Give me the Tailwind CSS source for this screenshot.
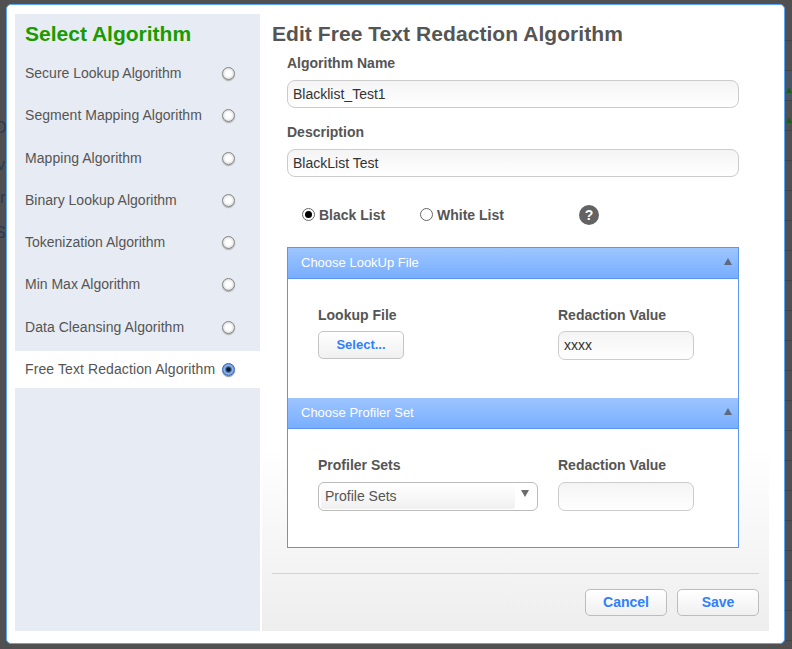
<!DOCTYPE html>
<html lang="en">
<head>
  <meta charset="UTF-8">
  <title>Edit Free Text Redaction Algorithm</title>
  <script src="https://cdn.jsdelivr.net/npm/@tailwindcss/browser@4"></script>
</head>
<body class="relative w-[792px] h-[649px] overflow-hidden bg-[#505050] font-['Liberation_Sans',Arial,sans-serif] text-[14px] text-[#555]">
  <!-- page showing behind the dialog overlay -->
  <div class="absolute top-0 right-0 w-[7px] h-full bg-[repeating-linear-gradient(to_bottom,#505050_0,#505050_29px,#444444_29px,#444444_30px)] bg-[position:0_11px]"></div>
  <div class="absolute top-[71px] right-0 w-[7px] h-[29px] bg-[#4a5663]"></div>
  <span class="absolute top-[87px] right-0 w-0 h-0 border-x-[3px] border-x-transparent border-b-[6px] border-b-[#1c5c1c]"></span>
  <span class="absolute top-[117px] right-0 w-0 h-0 border-x-[3px] border-x-transparent border-b-[6px] border-b-[#1c5c1c]"></span>
  <span class="absolute left-[-5px] top-[119px] text-[16px] leading-[18px] text-[#2b3a52]">D</span>
  <span class="absolute left-[-3px] top-[156px] text-[16px] leading-[18px] text-[#2b3a52]">v</span>
  <span class="absolute left-[0px] top-[189px] text-[16px] leading-[18px] text-[#2b3a52]">r</span>
  <span class="absolute left-[-5px] top-[224px] text-[16px] leading-[18px] text-[#2b3a52]">S</span>

  <div class="relative ml-[6px] mt-[4px] w-[779px] h-[640px] bg-white border border-[#5aa5f5] rounded-[5px] pl-[8px] pt-[9px] flex gap-[2px]">
    <!-- left list -->
    <div class="w-[245px] h-[617px] bg-[#e7ebf3]">
      <h2 class="h-[40px] pl-[10px] pt-[7px] text-[21px] leading-[26px] font-bold text-[#199b00]">Select Algorithm</h2>
      <div class="mt-[0.5px] flex flex-col gap-[5px]">
        <div class="h-[37px] pl-[10px] pr-[25px] flex items-center justify-between">Secure Lookup Algorithm<span class="w-[13px] h-[13px] rounded-full border border-[#858585] bg-radial from-white from-35% to-[#c6c6c6] shadow-[0_1px_1px_#aaa]"></span></div>
        <div class="h-[37px] pl-[10px] pr-[25px] flex items-center justify-between tracking-[0.04px]">Segment Mapping Algorithm<span class="w-[13px] h-[13px] rounded-full border border-[#858585] bg-radial from-white from-35% to-[#c6c6c6] shadow-[0_1px_1px_#aaa]"></span></div>
        <div class="mt-[1px] h-[37px] pl-[10px] pr-[25px] flex items-center justify-between tracking-[0.05px]">Mapping Algorithm<span class="w-[13px] h-[13px] rounded-full border border-[#858585] bg-radial from-white from-35% to-[#c6c6c6] shadow-[0_1px_1px_#aaa]"></span></div>
        <div class="h-[37px] pl-[10px] pr-[25px] flex items-center justify-between">Binary Lookup Algorithm<span class="w-[13px] h-[13px] rounded-full border border-[#858585] bg-radial from-white from-35% to-[#c6c6c6] shadow-[0_1px_1px_#aaa]"></span></div>
        <div class="h-[37px] pl-[10px] pr-[25px] flex items-center justify-between">Tokenization Algorithm<span class="w-[13px] h-[13px] rounded-full border border-[#858585] bg-radial from-white from-35% to-[#c6c6c6] shadow-[0_1px_1px_#aaa]"></span></div>
        <div class="h-[37px] pl-[10px] pr-[25px] flex items-center justify-between">Min Max Algorithm<span class="w-[13px] h-[13px] rounded-full border border-[#858585] bg-radial from-white from-35% to-[#c6c6c6] shadow-[0_1px_1px_#aaa]"></span></div>
        <div class="mt-[1px] h-[37px] pl-[10px] pr-[25px] flex items-center justify-between tracking-[0.05px]">Data Cleansing Algorithm<span class="w-[13px] h-[13px] rounded-full border border-[#858585] bg-radial from-white from-35% to-[#c6c6c6] shadow-[0_1px_1px_#aaa]"></span></div>
        <div class="h-[37px] pl-[10px] pr-[25px] flex items-center justify-between bg-white tracking-[0.1px]">Free Text Redaction Algorithm<span class="w-[13px] h-[13px] rounded-full border border-[#2f62ad] bg-radial from-[#0b1a33] from-20% via-[#8fb6ee] via-50% to-[#3f78cf] shadow-[0_1px_1px_#789]"></span></div>
      </div>
    </div>

    <!-- edit form -->
    <div class="w-[507px] h-[617px] pl-[10px] bg-linear-to-b from-white from-70% to-[#eeeeee]">
      <h2 class="pt-[7px] h-[40px] text-[21px] leading-[26px] font-bold text-[#555] tracking-[0.06px]">Edit Free Text Redaction Algorithm</h2>
      <div class="ml-[15px] w-[452px]">
        <label class="block h-[18px] leading-[18px] font-bold">Algorithm Name</label>
        <div class="mt-[8px] h-[28px] px-[5px] flex items-center bg-linear-to-b from-[#f4f4f4] to-white border border-[#ccc] rounded-[8px] text-[#333]">Blacklist_Test1</div>
        <label class="block mt-[15px] h-[18px] leading-[18px] font-bold">Description</label>
        <div class="mt-[8px] h-[28px] px-[5px] flex items-center bg-linear-to-b from-[#f4f4f4] to-white border border-[#ccc] rounded-[8px] text-[#333]">BlackList Test</div>

        <div class="mt-[27px] h-[22px] pl-[15px] flex items-center font-bold">
          <span class="w-[13px] h-[13px] mb-[2px] rounded-full border border-[#666] bg-white flex items-center justify-center"><span class="w-[7px] h-[7px] rounded-full bg-black"></span></span>
          <span class="ml-[4px] w-[101px]">Black List</span>
          <span class="w-[13px] h-[13px] mb-[2px] rounded-full border border-[#666] bg-white"></span>
          <span class="ml-[4px] w-[142px]">White List</span>
          <span class="w-[20px] h-[20px] rounded-full bg-[#636363] text-white text-[14px] leading-[20px] text-center">?</span>
        </div>

        <div class="mt-[21px] h-[301px] border border-[#5c94ee] bg-white">
          <div class="h-[31px] pl-[13px] pr-[6px] flex items-center justify-between bg-linear-to-b from-[#9dc5ff] to-[#78aeff] border-b border-[#5c94ee] text-white text-[13px]">Choose LookUp File<span class="w-0 h-0 border-x-[4px] border-x-transparent border-b-[7px] border-b-[#5e6a7c] mb-[3px]"></span></div>
          <div class="h-[119px] pl-[30px] pt-[27px] flex">
            <div class="w-[240px]">
              <div class="h-[18px] leading-[18px] font-bold">Lookup File</div>
              <div class="mt-[7px] w-[86px] h-[28px] flex items-center justify-center bg-linear-to-b from-white to-[#f0f0f0] border border-[#c4c4c4] rounded-[5px] font-bold text-[13px] text-[#2f80ff]">Select...</div>
            </div>
            <div>
              <div class="h-[18px] leading-[18px] font-bold">Redaction Value</div>
              <div class="mt-[7px] w-[136px] h-[29px] px-[5px] flex items-center bg-linear-to-b from-[#f4f4f4] to-white border border-[#ccc] rounded-[7px] text-[#333]">xxxx</div>
            </div>
          </div>
          <div class="h-[31px] pl-[13px] pr-[6px] flex items-center justify-between bg-linear-to-b from-[#9dc5ff] to-[#78aeff] border-b border-[#5c94ee] text-white text-[13px]">Choose Profiler Set<span class="w-0 h-0 border-x-[4px] border-x-transparent border-b-[7px] border-b-[#5e6a7c] mb-[3px]"></span></div>
          <div class="pl-[30px] pt-[27px] flex">
            <div class="w-[240px]">
              <div class="h-[18px] leading-[18px] font-bold">Profiler Sets</div>
              <div class="mt-[8px] w-[220px] h-[29px] pl-[2px] py-[1px] pr-[3px] flex bg-white border border-[#bbb] rounded-[6px]">
                <div class="w-[194px] pl-[4px] flex items-center bg-linear-to-b from-white to-[#f0f0f0] rounded-[3px]">Profile Sets</div>
                <span class="ml-[6px] mt-[6px] w-0 h-0 border-x-[4px] border-x-transparent border-t-[7px] border-t-[#6b6b6b]"></span>
              </div>
            </div>
            <div>
              <div class="h-[18px] leading-[18px] font-bold">Redaction Value</div>
              <div class="mt-[8px] w-[136px] h-[29px] bg-linear-to-b from-[#f4f4f4] to-white border border-[#ccc] rounded-[7px]"></div>
            </div>
          </div>
        </div>
      </div>

      <div class="mt-[25px] w-[487px] border-t border-[#d4d4d4] pt-[15px] flex justify-end gap-[10px] font-bold text-[#2f80ff]">
        <div class="w-[82px] h-[27px] flex items-center justify-center bg-linear-to-b from-white to-[#f0f0f0] border border-[#bdbdbd] rounded-[5px]">Cancel</div>
        <div class="w-[82px] h-[27px] flex items-center justify-center bg-linear-to-b from-white to-[#f0f0f0] border border-[#bdbdbd] rounded-[5px]">Save</div>
      </div>
    </div>
  </div>
</body>
</html>
